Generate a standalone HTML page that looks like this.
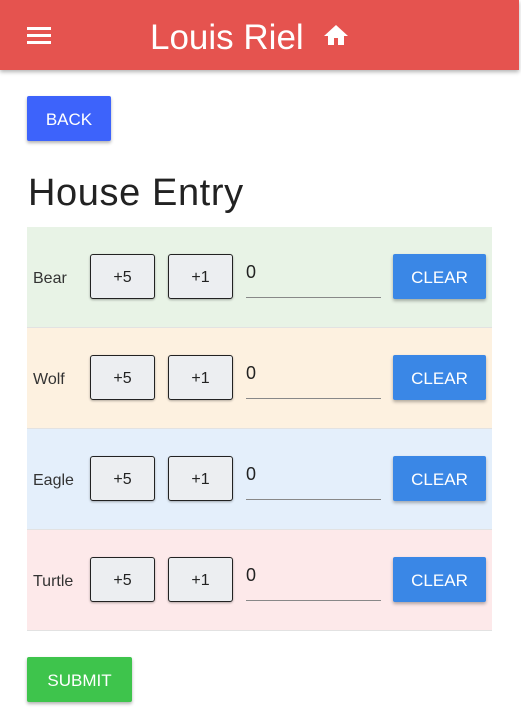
<!DOCTYPE html><html><head><style>
body{margin:0;width:521px;height:717px;background:#fff;font-family:"Liberation Sans",sans-serif;position:relative;overflow:hidden}
.a{position:absolute}
.hdr{left:0;top:0;width:519px;height:70px;background:#e5534f;box-shadow:0 2px 4px rgba(0,0,0,.3)}
.btn{position:absolute;color:#fff;font-size:17px;display:flex;align-items:center;justify-content:center;padding-top:3px;box-sizing:border-box;border-radius:2px;box-shadow:0 2px 3px rgba(0,0,0,.3)}
.row{position:absolute;left:27px;width:465px;height:100px;border-bottom:1px solid #e2e2e2}
.lbl{position:absolute;left:6px;top:2px;line-height:100px;font-size:16px;color:#333}
.pb{position:absolute;top:27px;width:63px;height:43px;padding-top:3px;box-sizing:content-box;height:40px;border:1px solid #222;border-radius:3px;background:#eceef1;font-size:16px;color:#222;display:flex;align-items:center;justify-content:center;box-shadow:0 1px 2px rgba(0,0,0,.3)}
.inp{position:absolute;left:219px;top:35px;width:135px;height:35px;border-bottom:1px solid #888;font-size:18px;color:#222}
.clr{left:366px;top:27px;width:93px;height:45px;background:#3a87e6}
</style></head><body>
<div class="a hdr"></div>
<div class="a" style="left:27px;top:27px"><div style="width:24px;height:3px;background:#fff;margin-bottom:4px"></div><div style="width:24px;height:3px;background:#fff;margin-bottom:4px"></div><div style="width:24px;height:3px;background:#fff"></div></div>
<div class="a" style="left:150px;top:15px;font-size:35px;color:#fff;line-height:46px">Louis Riel</div>
<svg class="a" style="left:323px;top:24px" width="26" height="22" viewBox="0 0 26 22"><path d="M13 1 L25 12 H21 V21 H15 V14 H11 V21 H5 V12 H1 Z" fill="#fff"/></svg>
<div class="btn" style="left:27px;top:96px;width:84px;height:45px;background:#3d63fb">BACK</div>
<div class="a" style="left:28px;top:170px;font-size:38px;color:#222;line-height:46px;letter-spacing:0.6px">House Entry</div>

<div class="row" style="top:227px;background:#e8f3e6"><div class="lbl">Bear</div><div class="pb" style="left:63px">+5</div><div class="pb" style="left:141px">+1</div><div class="inp">0</div><div class="btn clr">CLEAR</div></div>
<div class="row" style="top:328px;background:#fdf1e0"><div class="lbl">Wolf</div><div class="pb" style="left:63px">+5</div><div class="pb" style="left:141px">+1</div><div class="inp">0</div><div class="btn clr">CLEAR</div></div>
<div class="row" style="top:429px;background:#e4effb"><div class="lbl">Eagle</div><div class="pb" style="left:63px">+5</div><div class="pb" style="left:141px">+1</div><div class="inp">0</div><div class="btn clr">CLEAR</div></div>
<div class="row" style="top:530px;background:#fde9ea"><div class="lbl">Turtle</div><div class="pb" style="left:63px">+5</div><div class="pb" style="left:141px">+1</div><div class="inp">0</div><div class="btn clr">CLEAR</div></div>

<div class="btn" style="left:27px;top:657px;width:105px;height:45px;background:#3ec44c">SUBMIT</div>
</body></html>
